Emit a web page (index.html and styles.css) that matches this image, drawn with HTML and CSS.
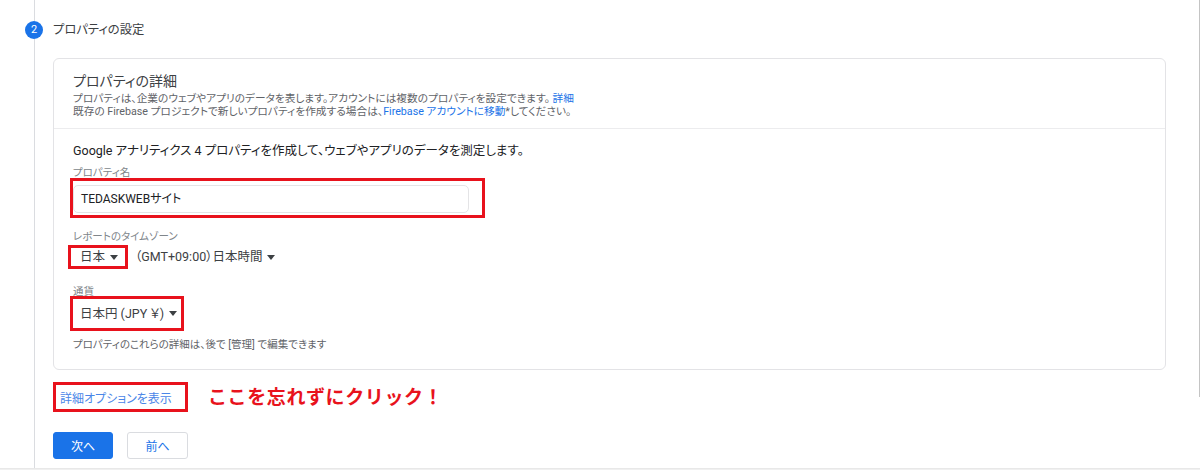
FILE: index.html
```html
<!DOCTYPE html>
<html lang="ja">
<head>
<meta charset="utf-8">
<link rel="stylesheet" href="styles.css">
</head>
<body>
<div class="page">
  <div class="rail">
    <div class="rail-top"></div>
    <div class="step-num">2</div>
    <div class="rail-line"></div>
  </div>
  <div class="main">
    <div class="step-title">プロパティの設定</div>
    <div class="card">
      <div class="card-head">
        <div class="card-title">プロパティの詳細</div>
        <div class="card-desc">プロパティは、企業のウェブやアプリのデータを表します。アカウントには複数のプロパティを設定できます。 <span class="link">詳細</span></div>
        <div class="card-desc">既存の Firebase プロジェクトで新しいプロパティを作成する場合は、<span class="link">Firebase アカウントに移動</span>*してください。</div>
      </div>
      <div class="card-body">
        <div class="intro">Google アナリティクス 4 プロパティを作成して、ウェブやアプリのデータを測定します。</div>
        <div class="label label-name">プロパティ名</div>
        <div class="mark mark-input">
          <div class="input">TEDASKWEBサイト</div>
        </div>
        <div class="label label-tz">レポートのタイムゾーン</div>
        <div class="tz-row">
          <div class="mark mark-country"><span class="select">日本<span class="caret"></span></span></div>
          <span class="select tz-select">（GMT+09:00）日本時間<span class="caret"></span></span>
        </div>
        <div class="label label-cur">通貨</div>
        <div class="mark mark-currency"><span class="select">日本円 (JPY ￥)<span class="caret"></span></span></div>
        <div class="note">プロパティのこれらの詳細は、後で [管理] で編集できます</div>
      </div>
    </div>
    <div class="adv-row">
      <div class="mark mark-link"><span class="link adv-link">詳細オプションを表示</span></div>
      <div class="callout">ここを忘れずにクリック！</div>
    </div>
    <div class="buttons">
      <button class="btn btn-primary">次へ</button>
      <button class="btn btn-secondary">前へ</button>
    </div>
  </div>
  <div class="scrollbar"></div>
</div>
<div class="bottom-strip"></div>
</body>
</html>
```

FILE: styles.css
```css
* { box-sizing: border-box; }
html, body { margin: 0; padding: 0; }
body {
  background: #ffffff;
  font-family: "Roboto", "Noto Sans CJK JP", sans-serif;
  font-feature-settings: "palt";
  color: #202124;
  width: 1200px;
  height: 470px;
  overflow: hidden;
}
.page {
  display: flex;
  height: 468px;
}
.rail {
  width: 53px;
  flex: none;
  display: flex;
  flex-direction: column;
  align-items: flex-start;
  padding-left: 25px;
}
.rail-top {
  width: 1px;
  height: 21px;
  margin-left: 9px;
  background: #dadce0;
}
.step-num {
  width: 18px;
  height: 18px;
  border-radius: 50%;
  background: #1a73e8;
  color: #fff;
  font-size: 11px;
  line-height: 18px;
  text-align: center;
  font-family: "Roboto", sans-serif;
}
.rail-line {
  flex: 1;
  width: 1px;
  margin-left: 9px;
  background: #dadce0;
}
.main {
  width: 1113px;
  flex: none;
  padding-top: 20px;
}
.step-title {
  font-size: 12.3px;
  line-height: 20px;
  color: #3c4043;
}
.card {
  margin-top: 18px;
  border: 1px solid #e3e3e6;
  border-radius: 6px;
  background: #fff;
}
.card-head {
  padding: 12px 19px 10px;
  border-bottom: 1px solid #ececee;
}
.card-title {
  font-size: 14px;
  line-height: 21px;
  color: #3c4043;
}
.card-desc {
  font-size: 10.7px;
  line-height: 13px;
  color: #5f6368;
}
.link { color: #1a73e8; }
.card-body {
  padding: 14px 19px 17px;
}
.intro {
  font-size: 12.5px;
  line-height: 16px;
  color: #202124;
}
.label {
  font-size: 10.5px;
  line-height: 14px;
  color: #80868b;
}
.label-name { margin-top: 7px; }
.mark {
  border: 3px solid #e8121c;
}
.mark-input {
  margin-top: -2px;
  width: 415px;
  margin-left: -3px;
  padding: 4px 13px 2px 0;
}
.input {
  height: 28px;
  border: 1px solid #e4e4e6;
  border-radius: 5px;
  padding-left: 7px;
  font-size: 12px;
  line-height: 26px;
  color: #202124;
}
.label-tz { margin-top: 12px; }
.tz-row {
  margin-top: 1px;
  display: flex;
  align-items: center;
}
.mark-country {
  margin-left: -5px;
  width: 60px;
  height: 24px;
  padding-left: 9px;
  display: flex;
  align-items: center;
}
.select {
  display: inline-flex;
  align-items: center;
  font-size: 12.5px;
  color: #3c4043;
  line-height: 16px;
}
.caret {
  display: inline-block;
  width: 0;
  height: 0;
  border-left: 4px solid transparent;
  border-right: 4px solid transparent;
  border-top: 5px solid #3c4043;
  margin-left: 5px;
}
.tz-select {
  margin-left: 7px;
}
.label-cur { margin-top: 16px; }
.mark-currency {
  margin-top: -3px;
  margin-left: -3px;
  width: 114px;
  height: 35px;
  padding-left: 7px;
  display: flex;
  align-items: center;
}
.note {
  margin-top: 7px;
  font-size: 10.5px;
  line-height: 14px;
  color: #5f6368;
}
.adv-row {
  margin-top: 12px;
  display: flex;
  align-items: center;
}
.mark-link {
  width: 135px;
  height: 30px;
  padding-left: 4px;
  display: flex;
  align-items: center;
}
.adv-link {
  font-size: 12px;
  color: #4a86e8;
}
.callout {
  margin-left: 20px;
  margin-top: -3px;
  font-size: 19px;
  font-weight: 700;
  color: #e8121c;
  font-feature-settings: normal;
  letter-spacing: 0.6px;
}
.buttons {
  margin-top: 20px;
  display: flex;
  gap: 14px;
}
.btn {
  height: 27px;
  border-radius: 3px;
  font-family: "Roboto", "Noto Sans CJK JP", sans-serif;
  font-size: 12px;
  padding: 0;
  cursor: pointer;
}
.btn-primary {
  width: 60px;
  background: #1a73e8;
  border: 1px solid #1a73e8;
  color: #fff;
}
.btn-secondary {
  width: 61px;
  background: #fff;
  border: 1px solid #dadce0;
  color: #1a73e8;
}
.scrollbar {
  margin-left: auto;
  width: 1px;
  height: 397px;
  background: #c4c4c4;
}
.bottom-strip {
  height: 2px;
  background: #f0f0f0;
  border-top: 1px solid #e8e8e8;
}
```
